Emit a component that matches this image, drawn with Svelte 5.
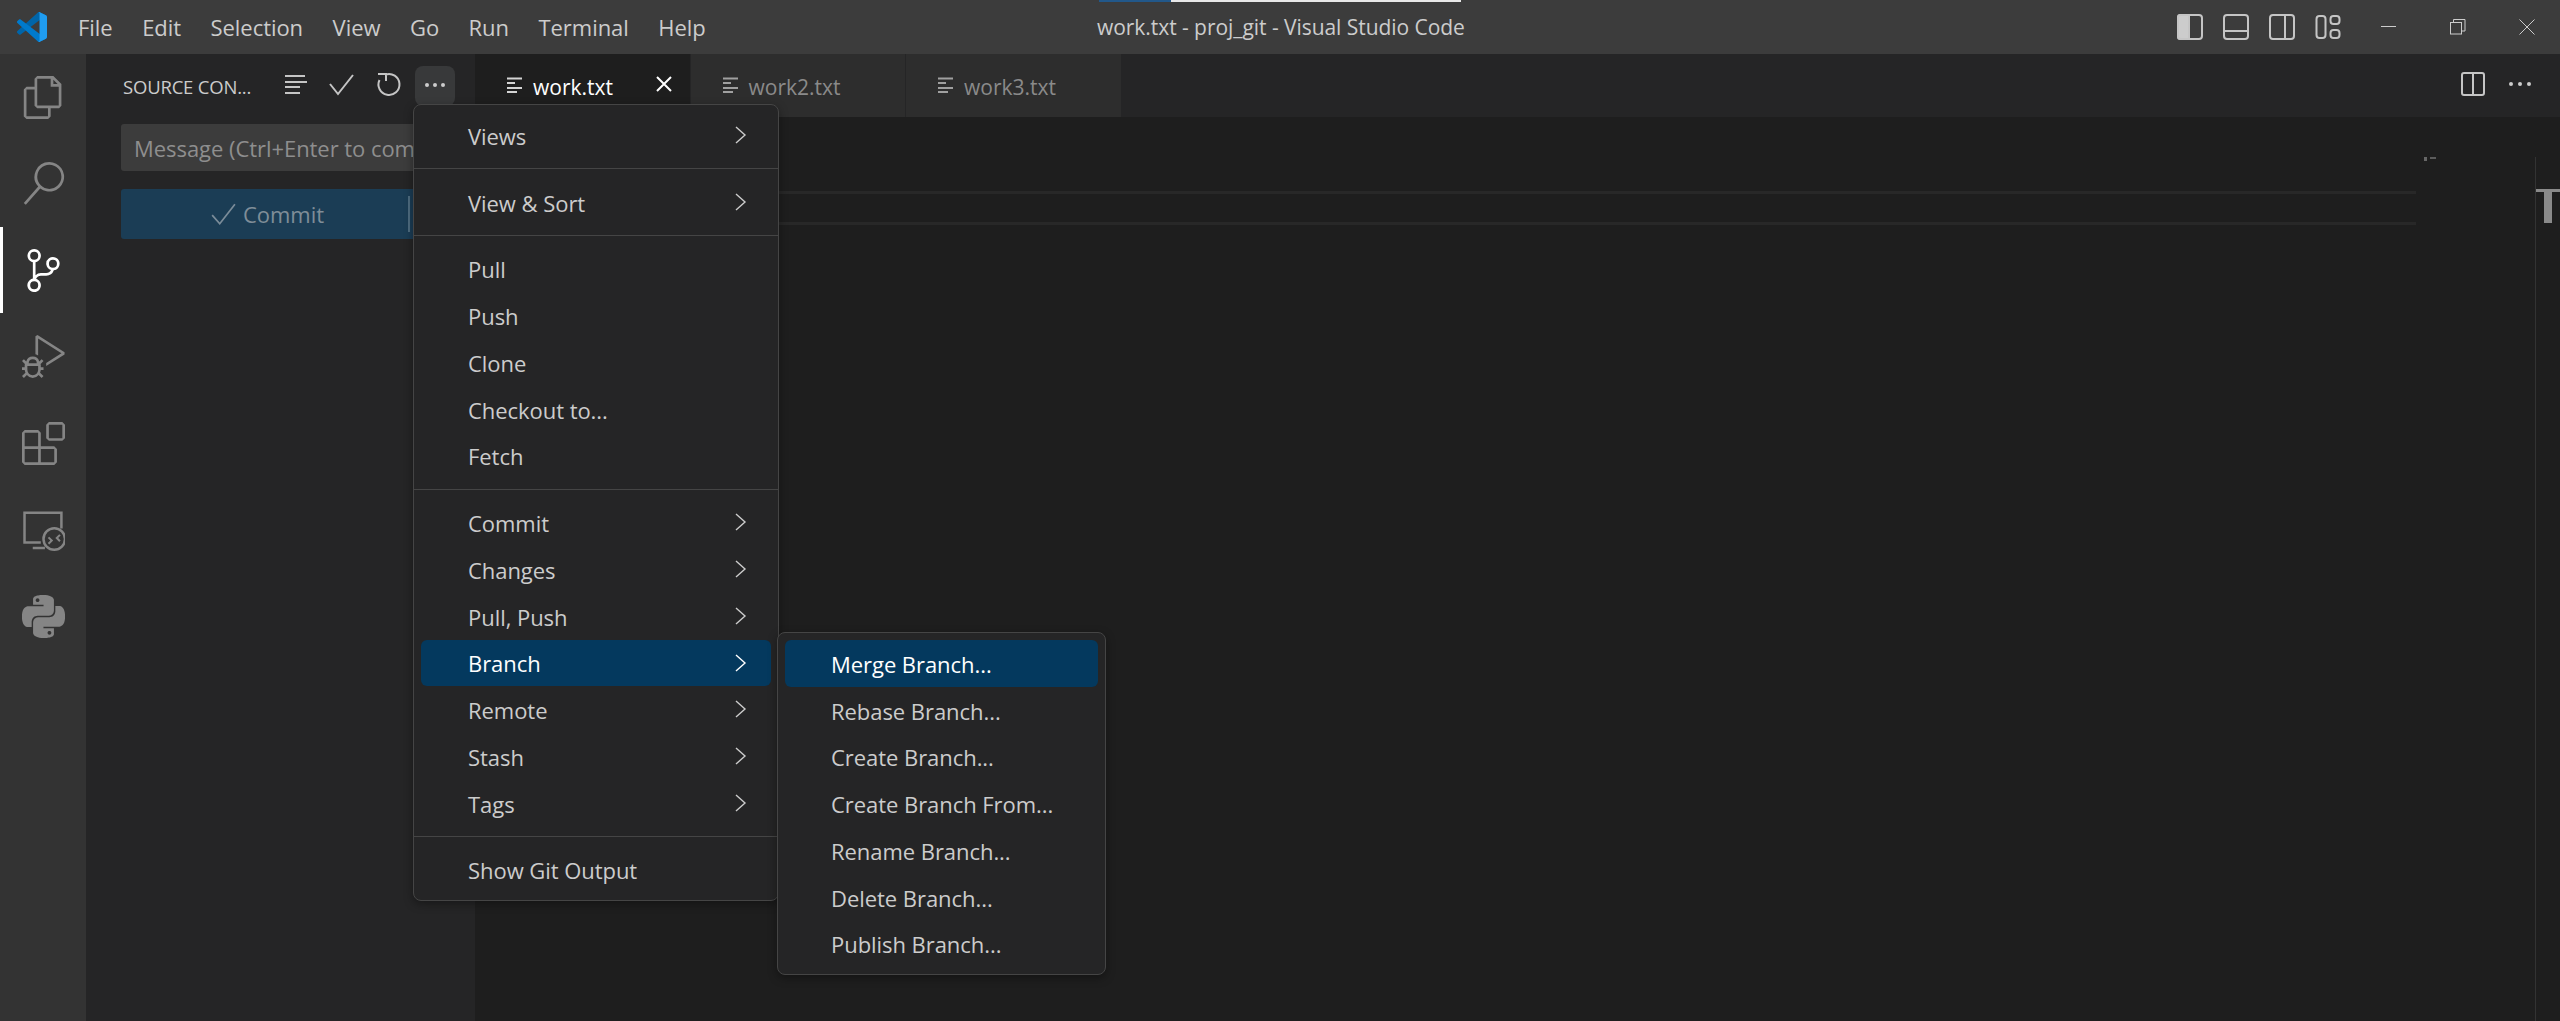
<script lang="ts">
  const menuBar = ['File', 'Edit', 'Selection', 'View', 'Go', 'Run', 'Terminal', 'Help'];

  // null marks a separator line
  const mainMenu = [
    { label: 'Views', more: true },
    null,
    { label: 'View & Sort', more: true },
    null,
    { label: 'Pull' },
    { label: 'Push' },
    { label: 'Clone' },
    { label: 'Checkout to...' },
    { label: 'Fetch' },
    null,
    { label: 'Commit', more: true },
    { label: 'Changes', more: true },
    { label: 'Pull, Push', more: true },
    { label: 'Branch', more: true, active: true },
    { label: 'Remote', more: true },
    { label: 'Stash', more: true },
    { label: 'Tags', more: true },
    null,
    { label: 'Show Git Output' },
  ];

  const branchMenu = [
    'Merge Branch...',
    'Rebase Branch...',
    'Create Branch...',
    'Create Branch From...',
    'Rename Branch...',
    'Delete Branch...',
    'Publish Branch...',
  ];

  const tabs = [
    { name: 'work.txt', active: true },
    { name: 'work2.txt' },
    { name: 'work3.txt' },
  ];

  const activity = [
    { d: 'M17.5 0h-9L7 1.5V6H2.5L1 7.5v15.07L2.5 24h12.07L16 22.57V18h4.7l1.3-1.43V4.5L17.5 0zm0 2.12l2.38 2.38H17.5V2.12zm-3 20.38h-12v-15H7v9.07L8.5 18h6v4.5zm6-6h-12v-15H16V6h4.5v10.5z' },
    { d: 'M15.25 0a8.25 8.25 0 0 0-6.18 13.72L1 22.88l1.12 1 8.05-9.12A8.251 8.251 0 1 0 15.25.01V0zm0 15a6.75 6.75 0 1 1 0-13.5 6.75 6.75 0 0 1 0 13.5z' },
    { active: true, d: 'M21.007 8.222A3.738 3.738 0 0 0 15.045 5.2a3.737 3.737 0 0 0 1.156 6.583 2.988 2.988 0 0 1-2.668 1.67h-2.99a4.456 4.456 0 0 0-2.989 1.165V7.4a3.737 3.737 0 1 0-1.494 0v9.117a3.776 3.776 0 1 0 1.816.099 2.99 2.99 0 0 1 2.668-1.667h2.99a4.484 4.484 0 0 0 4.223-3.039 3.736 3.736 0 0 0 3.25-3.687zM4.565 3.738a2.242 2.242 0 1 1 4.484 0 2.242 2.242 0 0 1-4.484 0zm4.484 16.441a2.242 2.242 0 1 1-4.484 0 2.242 2.242 0 0 1 4.484 0zm8.221-9.715a2.242 2.242 0 1 1 0-4.485 2.242 2.242 0 0 1 0 4.485z' },
    { d: 'M10.94 13.5l-1.32 1.32a3.73 3.73 0 0 0-7.24 0L1.06 13.5 0 14.56l1.72 1.72-.22.22V18H0v1.5h1.5v.08c.077.489.214.966.41 1.42L0 22.94 1.06 24l1.65-1.65A4.308 4.308 0 0 0 6 24a4.31 4.31 0 0 0 3.29-1.65L10.94 24 12 22.94 10.09 21c.198-.464.336-.951.41-1.45v-.05H12V18h-1.5v-1.5l-.22-.22L12 14.56l-1.06-1.06zM6 13.5a2.25 2.25 0 0 1 2.25 2.25h-4.5A2.25 2.25 0 0 1 6 13.5zm3 6a3.33 3.33 0 0 1-3 3 3.33 3.33 0 0 1-3-3v-2.25h6v2.25zm14.76-9.9v1.26L13.5 17.37V15.6l8.5-5.37L9 2v9.46a5.07 5.07 0 0 0-1.5-.72V.63L8.64 0l15.12 9.6z' },
    { d: 'M13.5 1.5L15 0h7.5L24 1.5V9l-1.5 1.5H15L13.5 9V1.5zm1.5 0V9h7.5V1.5H15zM0 15V6l1.5-1.5H9L10.5 6v7.5H18l1.5 1.5v7.5L18 24H1.5L0 22.5V15zm9-1.5V6H1.5v7.5H9zM9 15H1.5v7.5H9V15zm1.5 7.5H18V15h-7.5v7.5z' },
    { d: 'M.7 2h22v9.5h-1.4V3.4H2.1v15.2h8.4V20H.7zM6 21.6h6.8V23H6zM18 10.6a6.7 6.7 0 1 1 0 13.4 6.7 6.7 0 0 1 0-13.4zm0 1.4a5.3 5.3 0 1 0 0 10.6 5.3 5.3 0 0 0 0-10.6zM15.2 16l2.2 2.2-2.2 2.2-.8-.8 1.4-1.4-1.4-1.4zM20.8 14.6l.8.8-1.4 1.4 1.4 1.4-.8.8-2.2-2.2z' },
    { d: 'M14.25.18l.9.2.73.26.59.3.45.32.34.34.25.34.16.33.1.3.04.26.02.2-.01.13V8.5l-.05.63-.13.55-.21.46-.26.38-.3.31-.33.25-.35.19-.35.14-.33.1-.3.07-.26.04-.21.02H8.77l-.69.05-.59.14-.5.22-.41.27-.33.32-.27.35-.2.36-.15.37-.1.35-.07.32-.04.27-.02.21v3.06H3.17l-.21-.03-.28-.07-.32-.12-.35-.18-.36-.26-.36-.36-.35-.46-.32-.59-.28-.73-.21-.88-.14-1.05-.05-1.23.06-1.22.16-1.04.24-.87.32-.71.36-.57.4-.44.42-.33.42-.24.4-.16.36-.1.32-.05.24-.01h.16l.06.01h8.16v-.83H6.18l-.01-2.75-.02-.37.05-.34.11-.31.17-.28.25-.26.31-.23.38-.2.44-.18.51-.15.58-.12.64-.1.71-.06.77-.04.84-.02 1.27.05zm-6.3 1.98l-.23.33-.08.41.08.41.23.34.33.22.41.09.41-.09.33-.22.23-.34.08-.41-.08-.41-.23-.33-.33-.22-.41-.09-.41.09zm13.09 3.95l.28.06.32.12.35.18.36.27.36.35.35.47.32.59.28.73.21.88.14 1.04.05 1.23-.06 1.23-.16 1.04-.24.86-.32.71-.36.57-.4.45-.42.33-.42.24-.4.16-.36.09-.32.05-.24.02-.16-.01h-8.22v.82h5.84l.01 2.76.02.36-.05.34-.11.31-.17.29-.25.25-.31.24-.38.2-.44.17-.51.15-.58.13-.64.09-.71.07-.77.04-.84.01-1.27-.04-1.07-.14-.9-.2-.73-.25-.59-.3-.45-.33-.34-.34-.25-.34-.16-.33-.1-.3-.04-.25-.02-.2.01-.13v-5.34l.05-.64.13-.54.21-.46.26-.38.3-.32.33-.24.35-.2.35-.14.33-.1.3-.06.26-.04.21-.02.13-.01h5.84l.69-.05.59-.14.5-.21.41-.28.33-.32.27-.35.2-.36.15-.36.1-.35.07-.32.04-.28.02-.21V6.07h2.09l.14.01zm-6.47 14.25l-.23.33-.08.41.08.41.23.33.33.23.41.08.41-.08.33-.23.23-.33.08-.41-.08-.41-.23-.33-.33-.23-.41-.08-.41.08z' },
  ];
</script>

<div class="window">
  <header class="titlebar">
    <svg class="logo" viewBox="0 0 100 100" width="30" height="30">
      <path fill="#0065a9" d="M96.5 10.8 75.9.9c-2.4-1.2-5.2-.7-7.1 1.2L1.3 63.5c-1.8 1.7-1.8 4.5 0 6.2l5.5 5c1.5 1.3 3.7 1.4 5.3.2L93.4 13.2c2.7-2.1 6.6-.1 6.6 3.3v-.2c0-2.4-1.4-4.6-3.5-5.5z" />
      <path fill="#007acc" d="M96.5 89.2 75.9 99.1c-2.4 1.2-5.2.7-7.1-1.2L1.3 36.5c-1.8-1.7-1.8-4.5 0-6.2l5.5-5c1.5-1.3 3.7-1.4 5.3-.2l81.3 61.7c2.7 2.1 6.6.1 6.6-3.3v.2c0 2.4-1.4 4.6-3.5 5.5z" />
      <path fill="#1f9cf0" d="M75.9 99.1c-2.4 1.2-5.2.7-7.1-1.2 2.3 2.3 6.2.7 6.2-2.6V4.7c0-3.3-3.9-4.9-6.2-2.6 1.9-1.9 4.7-2.4 7.1-1.2l20.6 9.9c2.1 1 3.5 3.2 3.5 5.5v67.4c0 2.4-1.4 4.5-3.5 5.5z" />
    </svg>
    <nav class="menubar">
      {#each menuBar as item}
        <span>{item}</span>
      {/each}
    </nav>
    <div class="title">work.txt - proj_git - Visual Studio Code</div>
    <div class="layout-icons">
      <svg viewBox="0 0 26 26" width="26" height="26" class="lay">
        <path fill="#ccc" d="M3 1h9v24H3a2 2 0 0 1-2-2V3a2 2 0 0 1 2-2z" />
        <rect x="1" y="1" width="24" height="24" rx="3" />
      </svg>
      <svg viewBox="0 0 26 26" width="26" height="26" class="lay">
        <rect x="1" y="1" width="24" height="24" rx="3" /><path d="M1 17h24" />
      </svg>
      <svg viewBox="0 0 26 26" width="26" height="26" class="lay">
        <rect x="1" y="1" width="24" height="24" rx="3" /><path d="M16 1v24" />
      </svg>
      <svg viewBox="0 0 26 26" width="26" height="26" class="lay">
        <rect x="1.5" y="2" width="9" height="22" rx="3" />
        <rect x="15.5" y="2" width="9" height="8" rx="3" />
        <rect x="15.5" y="16" width="9" height="8" rx="3" />
      </svg>
    </div>
    <div class="win-buttons">
      <svg viewBox="0 0 16 16" width="16" height="16" class="win"><path d="M0 7.5h15" /></svg>
      <svg viewBox="0 0 16 16" width="16" height="16" class="win">
        <rect x=".5" y="3.5" width="11" height="11.5" /><path d="M3.5 3.5V.5h11.5V12h-3" />
      </svg>
      <svg viewBox="0 0 16 16" width="16" height="16" class="win"><path d="M.5.5l15 15M15.5.5l-15 15" /></svg>
    </div>
    <div class="progress"><i></i><b></b></div>
  </header>

  <div class="body">
    <aside class="activity">
      {#each activity as icon}
        <div class="act" class:active={icon.active}>
          <svg viewBox="0 0 24 24" width="43" height="43"><path d={icon.d} /></svg>
        </div>
      {/each}
    </aside>

    <section class="sidebar">
      <div class="side-head">
        <span class="side-title">SOURCE CON...</span>
        <button class="tool">
          <svg viewBox="0 0 40 40" width="40" height="40" class="ln">
            <path d="M9 10h20M9 16h22M9 21h15M9 27h15" />
          </svg>
        </button>
        <button class="tool">
          <svg viewBox="0 0 40 40" width="40" height="40" class="ln"><path d="M8 18l8 10L31 9" /></svg>
        </button>
        <button class="tool">
          <svg viewBox="0 0 40 40" width="40" height="40" class="ln">
            <path d="M9 8h8v7M16.5 8.6A10.5 10.5 0 1 1 10.5 14" />
          </svg>
        </button>
        <button class="tool open">
          <svg viewBox="0 0 24 24" width="24" height="24" fill="#ccc">
            <circle cx="4" cy="11" r="2" /><circle cx="12" cy="11" r="2" /><circle cx="20" cy="11" r="2" />
          </svg>
        </button>
      </div>
      <div class="message">Message (Ctrl+Enter to commit on "main")</div>
      <div class="commit">
        <svg viewBox="0 0 24 24" width="26" height="26" class="ln dim"><path d="M2 13l7 8L23 3" /></svg>
        <span>Commit</span>
        <i></i>
      </div>
    </section>

    <main class="main">
      <div class="tabs">
        {#each tabs as tab}
          <div class="tab" class:active={tab.active}>
            <svg viewBox="0 0 16 16" width="16" height="16" class="file">
              <path d="M0 1.5h15M0 6h8M0 11h15M0 15h10" />
            </svg>
            <span>{tab.name}</span>
            {#if tab.active}
              <svg viewBox="0 0 16 16" width="16" height="16" class="close"><path d="M1 1l14 14M15 1L1 15" /></svg>
            {/if}
          </div>
        {/each}
        <div class="tab-actions">
          <svg viewBox="0 0 24 24" width="24" height="24" class="lay">
            <rect x="1" y="1" width="22" height="22" rx="2" /><path d="M12 1v22" />
          </svg>
          <svg viewBox="0 0 24 24" width="24" height="24" fill="#ccc">
            <circle cx="3" cy="12" r="2" /><circle cx="12" cy="12" r="2" /><circle cx="21" cy="12" r="2" />
          </svg>
        </div>
      </div>
      <div class="editor">
        <div class="code"><div class="current-line"></div></div>
        <div class="minimap"><i></i><i></i></div>
        <div class="scroll"><u></u><i></i></div>
      </div>
    </main>
  </div>

  <div class="menu main-menu">
    {#each mainMenu as item}
      {#if item}
        <div class="item" class:active={item.active}>
          <span>{item.label}</span>
          {#if item.more}
            <svg viewBox="0 0 12 18" width="12" height="18" class="chev"><path d="M1 1l9 8-9 8" /></svg>
          {/if}
        </div>
      {:else}
        <div class="sep"></div>
      {/if}
    {/each}
  </div>

  <div class="menu sub-menu">
    {#each branchMenu as label, i}
      <div class="item" class:active={i === 0}><span>{label}</span></div>
    {/each}
  </div>
</div>

<style>
  :global(body) {
    margin: 0;
    background: #1e1e1e;
  }

  .window {
    position: relative;
    width: 2560px;
    height: 1021px;
    overflow: hidden;
    font-family: 'Open Sans', 'Noto Sans', sans-serif;
    font-size: 22px;
    letter-spacing: -0.05px;
    color: #ccc;
    display: flex;
    flex-direction: column;
  }

  .titlebar {
    position: relative;
    height: 54px;
    flex-shrink: 0;
    background: #3c3c3c;
    display: flex;
    align-items: center;
  }

  .logo {
    margin-left: 17px;
  }

  .menubar {
    display: flex;
    gap: 29.5px;
    margin-left: 31px;
  }

  .title {
    position: absolute;
    left: 1097px;
    top: 13px;
    font-size: 21px;
    white-space: nowrap;
  }

  .layout-icons {
    position: absolute;
    left: 2177px;
    top: 14px;
    display: flex;
    gap: 20px;
  }

  .win-buttons {
    position: absolute;
    left: 2381px;
    top: 19px;
    display: flex;
    gap: 53px;
  }

  .lay {
    fill: none;
    stroke: #c5c5c5;
    stroke-width: 2;
  }

  .win {
    fill: none;
    stroke: #ccc;
    stroke-width: 1;
  }

  .progress {
    position: absolute;
    left: 1099px;
    top: 0;
    display: flex;
    height: 2px;
  }

  .progress i {
    width: 72px;
    background: #22588a;
  }

  .progress b {
    width: 290px;
    background: #e8e8e8;
  }

  .body {
    flex: 1;
    min-height: 0;
    display: flex;
  }

  .activity {
    position: relative;
    width: 86px;
    flex-shrink: 0;
    background: #333;
    display: flex;
    flex-direction: column;
    align-items: center;
    padding-top: 21.5px;
    gap: 43.5px;
  }

  .act {
    height: 43px;
    fill: #858585;
  }

  .act.active {
    fill: #fff;
  }

  .act.active::before {
    content: '';
    position: absolute;
    left: 0;
    top: 173px;
    width: 3px;
    height: 86px;
    background: #fff;
  }

  .sidebar {
    width: 389px;
    flex-shrink: 0;
    box-sizing: border-box;
    background: #252526;
    padding: 12px 21px 0 35px;
  }

  .side-head {
    display: flex;
    align-items: center;
    height: 40px;
    gap: 6.6px;
    margin-bottom: 18px;
  }

  .side-title {
    width: 146px;
    flex-shrink: 0;
    padding-left: 2px;
    font-size: 18.5px;
    letter-spacing: -0.2px;
    white-space: nowrap;
  }

  .tool {
    width: 40px;
    height: 40px;
    padding: 0;
    border: 0;
    border-radius: 8px;
    background: none;
    display: flex;
    align-items: center;
    justify-content: center;
    flex-shrink: 0;
  }

  .tool.open {
    background: #38393a;
  }

  .ln {
    fill: none;
    stroke: #c5c5c5;
    stroke-width: 2;
  }

  .ln.dim {
    stroke: #7b8c99;
    stroke-width: 1.6;
  }

  .message {
    height: 47px;
    box-sizing: border-box;
    padding: 1px 13px 0;
    line-height: 47px;
    background: #3c3c3c;
    border-radius: 3px;
    color: #8e8e8e;
    white-space: nowrap;
    overflow: hidden;
  }

  .commit {
    position: relative;
    margin-top: 18px;
    height: 50px;
    display: flex;
    align-items: center;
    padding-left: 89px;
    gap: 7px;
    background: #1b3d55;
    border-radius: 3px;
    color: #7f8d98;
  }

  .commit i {
    position: absolute;
    left: 287px;
    top: 7px;
    width: 2px;
    height: 36px;
    background: #4e6c80;
  }

  .main {
    flex: 1;
    min-width: 0;
    display: flex;
    flex-direction: column;
  }

  .tabs {
    height: 63px;
    flex-shrink: 0;
    background: #252526;
    display: flex;
  }

  .tab {
    width: 215.5px;
    height: 63px;
    box-sizing: border-box;
    padding: 2px 0 0 32px;
    border-right: 1px solid #252526;
    background: #2d2d2d;
    color: #8a8a8a;
    display: flex;
    align-items: center;
    gap: 10px;
    font-size: 21px;
    letter-spacing: 0;
  }

  .tab.active {
    background: #1e1e1e;
    color: #fff;
  }

  .file {
    fill: none;
    stroke: #a0a0a0;
    stroke-width: 2.2;
    flex-shrink: 0;
    margin-top: -4px;
  }

  .tab.active .file {
    stroke: #d4d4d4;
  }

  .close {
    fill: none;
    stroke: #fff;
    stroke-width: 2;
    margin-left: 33px;
    margin-top: -6px;
  }

  .tab-actions {
    margin-left: auto;
    display: flex;
    align-items: center;
    gap: 23px;
    padding: 0 28px 3px 0;
  }

  .editor {
    flex: 1;
    min-height: 0;
    display: flex;
    background: #1e1e1e;
  }

  .code {
    flex: 1;
    padding-top: 74px;
  }

  .current-line {
    height: 28px;
    border-top: 3px solid #282828;
    border-bottom: 3px solid #282828;
  }

  .minimap {
    width: 119px;
    padding: 40px 0 0 8px;
    box-sizing: border-box;
    display: flex;
    gap: 3px;
    align-items: flex-start;
  }

  .minimap i {
    width: 3px;
    height: 4px;
    background: #666;
  }

  .minimap i + i {
    width: 6px;
    height: 2px;
    background: #5c5c5c;
  }

  .scroll {
    position: relative;
    width: 24px;
    margin-top: 40px;
    border-left: 1px solid #333;
  }

  .scroll u {
    position: absolute;
    left: 0;
    right: 0;
    top: 32px;
    height: 3px;
    background: #8a8a8a;
  }

  .scroll i {
    position: absolute;
    left: 8px;
    top: 33px;
    width: 8px;
    height: 33px;
    background: #8a8a8a;
  }

  .menu {
    position: absolute;
    box-sizing: border-box;
    background: #252526;
    border: 1px solid #454545;
    border-radius: 8px;
    padding: 7px;
    box-shadow: 0 3px 10px rgba(0, 0, 0, 0.36);
  }

  .main-menu {
    left: 413px;
    top: 104px;
    width: 366px;
  }

  .sub-menu {
    left: 777px;
    top: 632px;
    width: 329px;
  }

  .item {
    position: relative;
    height: 46.75px;
    box-sizing: border-box;
    padding: 1px 0 0 47px;
    display: flex;
    align-items: center;
    border-radius: 6px;
    color: #ccc;
  }

  .sub-menu .item {
    padding-left: 46px;
  }

  .item.active {
    background: #04395e;
    color: #fff;
  }

  .chev {
    position: absolute;
    left: 314px;
    top: 14px;
    fill: none;
    stroke: #ccc;
    stroke-width: 1.4;
  }

  .item.active .chev {
    stroke: #fff;
  }

  .sep {
    height: 1px;
    margin: 9.5px -7px;
    background: #454545;
  }
</style>
